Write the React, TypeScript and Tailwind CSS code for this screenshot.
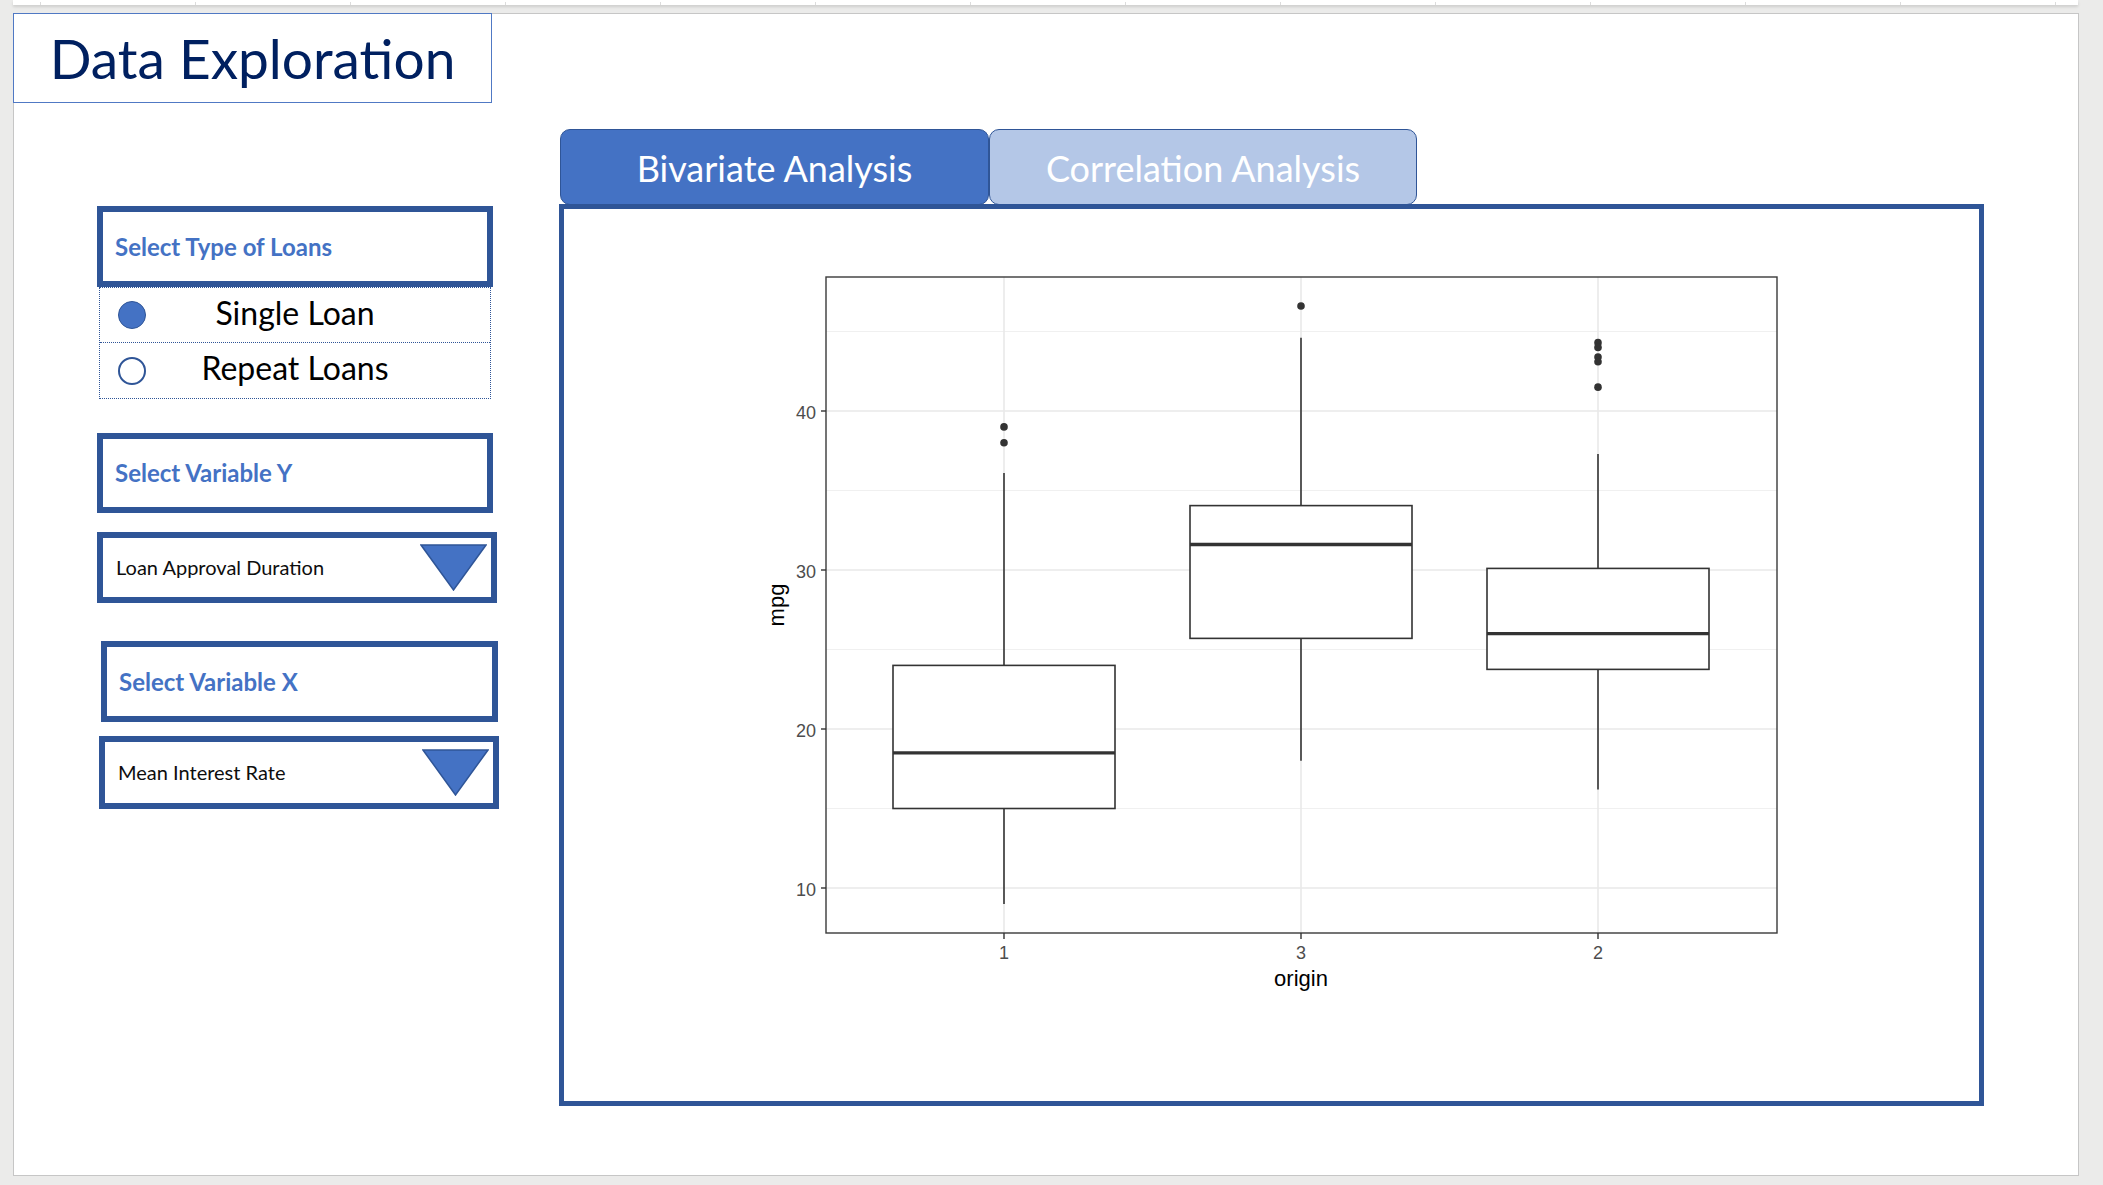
import React from "react";

const Y = (v: number) => 888 - (v - 10) * 15.9;

type BoxProps = {
  x: number;
  lo: number;
  q1: number;
  med: number;
  q3: number;
  hi: number;
  outliers: number[];
};

function Box({ x, lo, q1, med, q3, hi, outliers }: BoxProps) {
  const hw = 111;
  return (
    <g>
      <line x1={x} x2={x} y1={Y(q3)} y2={Y(hi)} stroke="#333" strokeWidth={1.6} />
      <line x1={x} x2={x} y1={Y(q1)} y2={Y(lo)} stroke="#333" strokeWidth={1.6} />
      <rect
        x={x - hw}
        y={Y(q3)}
        width={hw * 2}
        height={Y(q1) - Y(q3)}
        fill="#fff"
        stroke="#333"
        strokeWidth={1.6}
      />
      <line x1={x - hw} x2={x + hw} y1={Y(med)} y2={Y(med)} stroke="#333" strokeWidth={3.4} />
      {outliers.map((o, i) => (
        <circle key={i} cx={x} cy={Y(o)} r={3.8} fill="#333" />
      ))}
    </g>
  );
}

function Chart() {
  const xs = [1004, 1301, 1598];
  const labels = ["1", "3", "2"];
  return (
    <svg
      width={1415}
      height={892}
      viewBox="564 209 1415 892"
      className="block font-['Liberation_Sans',Arial,sans-serif]"
    >
      {[15, 25, 35, 45].map((v) => (
        <line key={v} x1={826} x2={1777} y1={Y(v)} y2={Y(v)} stroke="#f0f0f0" strokeWidth={1} />
      ))}
      {[10, 20, 30, 40].map((v) => (
        <line key={v} x1={826} x2={1777} y1={Y(v)} y2={Y(v)} stroke="#e9e9e9" strokeWidth={1.6} />
      ))}
      {xs.map((x) => (
        <line key={x} x1={x} x2={x} y1={277} y2={933} stroke="#e9e9e9" strokeWidth={1.6} />
      ))}
      <Box x={1004} lo={9} q1={15} med={18.5} q3={24} hi={36.1} outliers={[39, 38]} />
      <Box x={1301} lo={18} q1={25.7} med={31.6} q3={34.05} hi={44.6} outliers={[46.6]} />
      <Box x={1598} lo={16.2} q1={23.75} med={26} q3={30.1} hi={37.3} outliers={[44.3, 44.0, 43.4, 43.1, 41.5]} />
      <rect x={826} y={277} width={951} height={656} fill="none" stroke="#3a3a3a" strokeWidth={1.4} />
      {[10, 20, 30, 40].map((v) => (
        <g key={v}>
          <line x1={821} x2={826} y1={Y(v)} y2={Y(v)} stroke="#333" strokeWidth={1.4} />
          <text x={816} y={Y(v) + 8} textAnchor="end" fontSize={18} fill="#4d4d4d">
            {v}
          </text>
        </g>
      ))}
      {xs.map((x, i) => (
        <g key={x}>
          <line x1={x} x2={x} y1={933} y2={939} stroke="#333" strokeWidth={1.4} />
          <text x={x} y={959} textAnchor="middle" fontSize={18} fill="#4d4d4d">
            {labels[i]}
          </text>
        </g>
      ))}
      <text x={1301} y={986} textAnchor="middle" fontSize={22} fill="#000">
        origin
      </text>
      <text
        x={784}
        y={605}
        textAnchor="middle"
        fontSize={22}
        fill="#000"
        transform="rotate(-90 784 605)"
      >
        mpg
      </text>
    </svg>
  );
}

function Triangle() {
  return (
    <svg width={67} height={47} viewBox="0 0 67 47" className="block">
      <polygon points="1,1 66,1 33.5,46" fill="#4472c4" stroke="#2f5597" strokeWidth={1.5} />
    </svg>
  );
}

function LabelBox({ text, className }: { text: string; className: string }) {
  return (
    <div
      className={
        "flex items-center border-[6px] border-[#2f5597] bg-white pl-[12px] text-[24px] font-bold text-[#4472c4] " +
        className
      }
    >
      {text}
    </div>
  );
}

function Dropdown({ text, className }: { text: string; className: string }) {
  return (
    <div
      className={
        "flex items-center justify-between border-[6px] border-[#2f5597] bg-white pl-[13px] pr-[4px] text-[20px] text-[#0d0d0d] " +
        className
      }
    >
      <span className="-mt-px">{text}</span>
      <Triangle />
    </div>
  );
}

function RadioRow({ label, checked, className }: { label: string; checked: boolean; className: string }) {
  return (
    <div className={"grid items-center " + className}>
      <div className="col-start-1 row-start-1 ml-[18px] justify-self-start">
        {checked ? (
          <div className="h-[28px] w-[28px] rounded-full border-[1.5px] border-[#2f5597] bg-[#4472c4]" />
        ) : (
          <div className="h-[28px] w-[28px] rounded-full border-2 border-[#2f5597] bg-white" />
        )}
      </div>
      <div className="col-start-1 row-start-1 mb-[5px] justify-self-center text-[32px] leading-none text-black">
        {label}
      </div>
    </div>
  );
}

export default function App() {
  const ticks = Array.from({ length: 14 }, (_, i) => i);
  return (
    <div className="h-[1185px] w-[2103px] overflow-hidden bg-[#ebebea] font-['Lato',sans-serif]">
      <div className="ml-[13px] flex h-[5px] w-[2065px] items-end gap-[154px] bg-white pl-[27px] shadow-[0_2px_3px_rgba(0,0,0,0.12)]">
        {ticks.map((t) => (
          <div key={t} className="h-[3px] w-px bg-[#dcdcdc]" />
        ))}
      </div>
      <div className="ml-[13px] mt-[8px] h-[1163px] w-[2066px] border border-[#c6c6c6] bg-white">
        <div className="-ml-px -mt-px flex h-[90px] w-[479px] items-center justify-center border-[1.5px] border-[#5079c4] text-[55px] text-[#002060]">
          Data Exploration
        </div>
        <div className="mt-[26px] flex items-start">
          <div className="ml-[83px] mt-[77px] flex w-[402px] flex-col">
            <LabelBox text="Select Type of Loans" className="h-[81px] w-[396px]" />
            <div className="ml-[2px] flex h-[112px] w-[392px] flex-col border-[1.5px] border-dotted border-[#2f5597]">
              <RadioRow label="Single Loan" checked className="h-[55px] border-b-[1.5px] border-dotted border-[#2f5597]" />
              <RadioRow label="Repeat Loans" checked={false} className="flex-1" />
            </div>
            <LabelBox text="Select Variable Y" className="mt-[34px] h-[80px] w-[396px]" />
            <Dropdown text="Loan Approval Duration" className="mt-[19px] h-[71px] w-[400px]" />
            <LabelBox text="Select Variable X" className="ml-[4px] mt-[38px] h-[81px] w-[397px]" />
            <Dropdown text="Mean Interest Rate" className="ml-[2px] mt-[14px] h-[73px] w-[400px]" />
          </div>
          <div className="ml-[60px] flex flex-col">
            <div className="ml-px flex">
              <div className="flex h-[76px] w-[429px] items-center justify-center rounded-[10px] border border-[#2f5597] bg-[#4472c4] pt-[2px] text-[36px] text-white">
                Bivariate Analysis
              </div>
              <div className="flex h-[76px] w-[428px] items-center justify-center rounded-[10px] border border-[#2f5597] bg-[#b4c7e7] pt-[2px] text-[36px] text-white">
                Correlation Analysis
              </div>
            </div>
            <div className="-mt-px h-[902px] w-[1425px] border-[5px] border-[#2f5597] bg-white">
              <Chart />
            </div>
          </div>
        </div>
      </div>
    </div>
  );
}
